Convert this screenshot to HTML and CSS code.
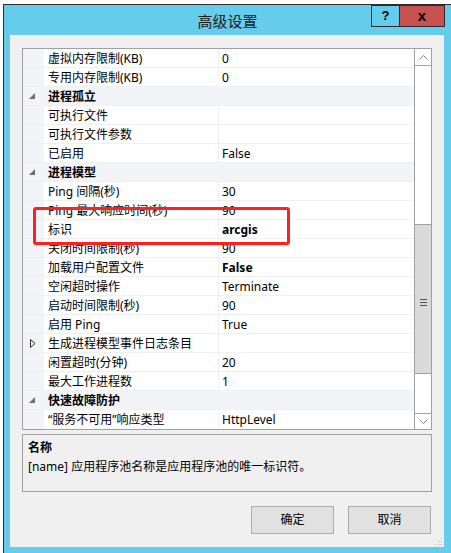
FILE: index.html
```html
<!DOCTYPE html>
<html lang="zh-CN">
<head>
<meta charset="utf-8">
<title>高级设置</title>
<link rel="stylesheet" href="styles.css">
</head>
<body>
<div class="window">
  <div class="titlebar">
    <div class="title">高级设置</div>
    <div class="caption">
      <div class="cbtn help">?</div>
      <div class="cbtn close">x</div>
    </div>
  </div>
  <div class="client">
    <div class="grid">
      <div class="rows">
        <div class="row"><div class="gut"></div><div class="name">虚拟内存限制(KB)</div><div class="val">0</div></div>
        <div class="row"><div class="gut"></div><div class="name">专用内存限制(KB)</div><div class="val">0</div></div>
        <div class="row cat"><div class="gut"><svg class="exp" width="6" height="6" viewBox="0 0 6 6"><polygon points="6,0 6,6 0,6" /></svg></div><div class="name">进程孤立</div></div>
        <div class="row"><div class="gut"></div><div class="name">可执行文件</div><div class="val"></div></div>
        <div class="row"><div class="gut"></div><div class="name">可执行文件参数</div><div class="val"></div></div>
        <div class="row"><div class="gut"></div><div class="name">已启用</div><div class="val">False</div></div>
        <div class="row cat"><div class="gut"><svg class="exp" width="6" height="6" viewBox="0 0 6 6"><polygon points="6,0 6,6 0,6" /></svg></div><div class="name">进程模型</div></div>
        <div class="row"><div class="gut"></div><div class="name">Ping 间隔(秒)</div><div class="val">30</div></div>
        <div class="row"><div class="gut"></div><div class="name">Ping 最大响应时间(秒)</div><div class="val">90</div></div>
        <div class="row"><div class="gut"></div><div class="name">标识</div><div class="val b">arcgis</div></div>
        <div class="row"><div class="gut"></div><div class="name">关闭时间限制(秒)</div><div class="val">90</div></div>
        <div class="row"><div class="gut"></div><div class="name">加载用户配置文件</div><div class="val b">False</div></div>
        <div class="row"><div class="gut"></div><div class="name">空闲超时操作</div><div class="val">Terminate</div></div>
        <div class="row"><div class="gut"></div><div class="name">启动时间限制(秒)</div><div class="val">90</div></div>
        <div class="row"><div class="gut"></div><div class="name">启用 Ping</div><div class="val">True</div></div>
        <div class="row"><div class="gut sub"><svg class="col" width="6" height="9" viewBox="0 0 6 9"><polygon points="0.5,0.5 5,4.5 0.5,8.5" /></svg></div><div class="name">生成进程模型事件日志条目</div><div class="val"></div></div>
        <div class="row"><div class="gut"></div><div class="name">闲置超时(分钟)</div><div class="val">20</div></div>
        <div class="row"><div class="gut"></div><div class="name">最大工作进程数</div><div class="val">1</div></div>
        <div class="row cat"><div class="gut"><svg class="exp" width="6" height="6" viewBox="0 0 6 6"><polygon points="6,0 6,6 0,6" /></svg></div><div class="name">快速故障防护</div></div>
        <div class="row last"><div class="gut"></div><div class="name">“服务不可用”响应类型</div><div class="val">HttpLevel</div></div>
      </div>
      <div class="scrollbar">
        <div class="sbtn up"><svg width="9" height="5" viewBox="0 0 9 5"><polyline points="0.5,4.5 4.5,0.5 8.5,4.5" /></svg></div>
        <div class="track t1"></div>
        <div class="thumb"><span></span><span></span><span></span></div>
        <div class="track t2"></div>
        <div class="sbtn down"><svg width="9" height="5" viewBox="0 0 9 5"><polyline points="0.5,0.5 4.5,4.5 8.5,0.5" /></svg></div>
      </div>
      <div class="mark"></div>
    </div>
    <div class="desc">
      <div class="desc-title">名称</div>
      <div class="desc-text">[name] 应用程序池名称是应用程序池的唯一标识符。</div>
    </div>
    <div class="buttons">
      <div class="btn">确定</div>
      <div class="btn">取消</div>
    </div>
    <svg class="grip" width="9" height="9" viewBox="0 0 9 9">
      <rect x="7" y="1" width="1" height="1"/><rect x="4" y="4" width="1" height="1"/><rect x="7" y="4" width="1" height="1"/>
      <rect x="1" y="7" width="1" height="1"/><rect x="4" y="7" width="1" height="1"/><rect x="7" y="7" width="1" height="1"/>
    </svg>
  </div>
</div>
</body>
</html>
```
FILE: styles.css
```css
* { box-sizing: border-box; }
html, body { margin: 0; }
body {
  background: #fff;
  padding: 4px 0 0 3px;
  width: 451px;
  height: 553px;
  overflow: hidden;
  font-family: "Segoe UI", "Noto Sans", "Noto Sans CJK SC", sans-serif;
  font-size: 12px;
  color: #000;
}
.window {
  width: 448px;
  height: 549px;
  background: #66cceb;
  border-left: 1px solid #2b2b2b;
  border-top: 1px solid #2b2b2b;
  display: flex;
  flex-direction: column;
}
.titlebar {
  position: relative;
  height: 30px;
  flex: none;
}
.title {
  text-align: center;
  font-size: 15px;
  line-height: 20px;
  padding-top: 6px;
  color: #1a1a1a;
}
.caption {
  position: absolute;
  top: 0;
  right: 6px;
  display: flex;
}
.cbtn {
  height: 22px;
  border: 1px solid #2b2b2b;
  text-align: center;
  font-weight: bold;
  font-family: "Liberation Sans", sans-serif;
  line-height: 19px;
}
.help {
  width: 28px;
  font-size: 13px;
  border-right: none;
}
.close {
  width: 46px;
  background: #c75050;
  font-size: 15px;
}
.client {
  position: relative;
  margin: 0 7px 6px 6px;
  height: 512px;
  background: #f0f0f0;
  padding: 13px 12px 0 12px;
  display: flex;
  flex-direction: column;
}
.grid {
  position: relative;
  width: 410px;
  height: 382px;
  border: 1px solid #a0a0a0;
  background: #fff;
  display: flex;
  flex: none;
}
.rows { width: 391px; }
.row {
  display: flex;
  height: 19px;
  border-bottom: 1px solid #eef0f4;
  line-height: 18px;
}
.row.last { border-bottom: none; }
.gut {
  width: 21px;
  flex: none;
  background: #f2f4f8;
  display: flex;
  align-items: center;
  justify-content: flex-end;
  padding-right: 9px;
}
.gut.sub { padding-right: 8px; }
.exp { fill: #6e6e6e; }
.col { fill: none; stroke: #333; stroke-width: 1; }
.name {
  width: 174px;
  flex: none;
  padding-left: 4px;
  padding-top: 1px;
  white-space: nowrap;
  overflow: visible;
}
.val {
  flex: 1;
  border-left: 1px solid #eef0f4;
  padding-left: 3px;
  padding-top: 1px;
  white-space: nowrap;
}
.b { font-weight: bold; }
.row.cat { background: #f2f4f8; }
.row.cat .name { font-weight: bold; }
.scrollbar {
  width: 17px;
  border-left: 1px solid #a0a0a0;
  display: flex;
  flex-direction: column;
  background: #fff;
}
.sbtn {
  height: 17px;
  display: flex;
  align-items: center;
  justify-content: center;
  flex: none;
}
.sbtn svg { fill: none; stroke: #808080; stroke-width: 1; }
.up { border-bottom: 1px solid #a0a0a0; }
.down { border-top: 1px solid #a0a0a0; height: 16px; }
.t1 { height: 158px; }
.t2 { flex: 1; }
.thumb {
  height: 150px;
  background: #dadada;
  border-top: 1px solid #a0a0a0;
  border-bottom: 1px solid #a0a0a0;
  display: flex;
  flex-direction: column;
  justify-content: center;
  align-items: center;
  gap: 2px;
  padding-top: 6px;
}
.thumb span {
  width: 7px;
  height: 1px;
  background: #555;
  display: block;
}
.mark {
  position: absolute;
  left: 10px;
  top: 158px;
  width: 257px;
  height: 38px;
  border: 3px solid #ff2020;
  border-radius: 3px;
}
.desc {
  margin-top: 4px;
  width: 410px;
  height: 58px;
  border: 1px solid #a0a0a0;
  padding: 3px 5px 0 5px;
  line-height: 19px;
}
.desc-title { font-weight: bold; }
.buttons {
  margin-top: 14px;
  width: 409px;
  display: flex;
  justify-content: flex-end;
  gap: 14px;
}
.btn {
  width: 83px;
  height: 28px;
  background: #e1e1e1;
  border: 1px solid #adadad;
  text-align: center;
  line-height: 26px;
}
.grip {
  position: absolute;
  right: 1px;
  bottom: 1px;
  fill: #b8b8b8;
}
```
